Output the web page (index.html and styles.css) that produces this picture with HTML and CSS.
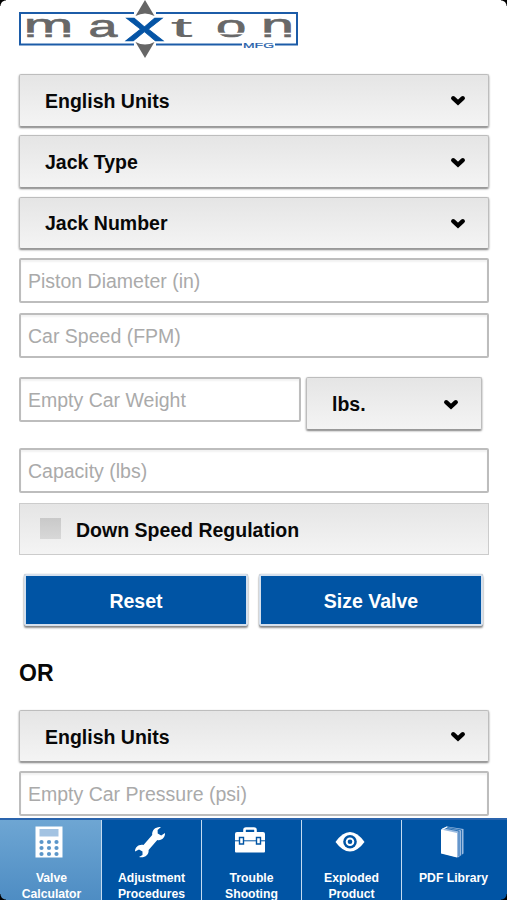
FILE: index.html
```
<!DOCTYPE html>
<html lang="en">
<head>
<meta charset="utf-8">
<meta name="viewport" content="width=device-width">
<title>Maxton Valve Calculator</title>
<link rel="stylesheet" href="styles.css">
</head>
<body>
<svg width="0" height="0" class="defs"><defs>
  <symbol id="chev" viewBox="0 0 16 12"><path d="M3.200 3.200 8 7.600 12.800 3.200" fill="none" stroke="#000" stroke-width="4.300" stroke-linecap="round"/></symbol>
</defs></svg>
<main class="screen">
  <header class="brand">
    <svg width="300" height="62" viewBox="0 0 300 62" role="img" aria-label="maxton MFG">
      <rect x="20" y="13" width="277" height="31.5" fill="#fff" stroke="#1c5ca8" stroke-width="2"/>
      <path d="M134 10h22v8h-22zM134 39h22v8h-22zM242 41h33v7h-33z" fill="#fff"/>
      <path d="M145 0 154.500 16 Q145 11 135.500 16ZM145 58 154.500 42 Q145 47 135.500 42Z" fill="#666"/>
      <g class="letters">
        <text transform="translate(23.8 37.3) scale(1.8 1)" font-size="33">m</text>
        <text transform="translate(88.500 37) scale(1.62 1)" font-size="32">a</text>
        <text transform="translate(170.500 37) scale(2.850 1)" font-size="28" class="t" textLength="9">t</text>
        <text transform="translate(216 37) scale(1.7 1)" font-size="32">o</text>
        <text transform="translate(261 37.3) scale(1.8 1)" font-size="33">n</text>
      </g>
      <path d="M26 33.500h47M215 33.500h33M263 33.500h31" stroke="#fff" stroke-width="1.400"/>
      <text class="x" transform="translate(124.800 41) scale(1.840 1)" font-size="43">x</text>
      <text class="mfg" x="243" y="47.500" font-size="8" textLength="31" lengthAdjust="spacingAndGlyphs">MFG</text>
    </svg>
  </header>
  <form class="form">
    <button type="button" class="select"><span>English Units</span><svg class="chev"><use href="#chev"/></svg></button>
    <button type="button" class="select"><span>Jack Type</span><svg class="chev"><use href="#chev"/></svg></button>
    <button type="button" class="select"><span>Jack Number</span><svg class="chev"><use href="#chev"/></svg></button>
    <input class="field" placeholder="Piston Diameter (in)">
    <input class="field" placeholder="Car Speed (FPM)">
    <div class="weight">
      <input class="field" placeholder="Empty Car Weight">
      <button type="button" class="select"><span>lbs.</span><svg class="chev"><use href="#chev"/></svg></button>
    </div>
    <input class="field" placeholder="Capacity (lbs)">
    <div class="check"><i class="box"></i><span>Down Speed Regulation</span></div>
    <div class="actions"><button type="button">Reset</button><button type="button">Size Valve</button></div>
    <h2>OR</h2>
    <button type="button" class="select"><span>English Units</span><svg class="chev"><use href="#chev"/></svg></button>
    <input class="field" placeholder="Empty Car Pressure (psi)">
  </form>
  <nav class="tabs">
    <a class="tab active">
      <svg viewBox="0 0 36 36"><path fill="#fff" d="M4.500 2.500h27v31h-27z"/><path fill="#a3c3e2" d="M8.500 5h19v7.500h-19z"/><g fill="#5b96c9"><circle cx="10.500" cy="18" r="2.100"/><circle cx="18" cy="18" r="2.100"/><circle cx="25.500" cy="18" r="2.100"/><circle cx="10.500" cy="24" r="2.100"/><circle cx="18" cy="24" r="2.100"/><circle cx="25.500" cy="24" r="2.100"/><circle cx="10.500" cy="30" r="2.100"/><circle cx="18" cy="30" r="2.100"/><circle cx="25.500" cy="30" r="2.100"/></g></svg>
      <span>Valve<br>Calculator</span>
    </a>
    <a class="tab">
      <svg viewBox="0 0 36 36"><path fill="#fff" d="M29 3C24 2.200 19.500 6 20.200 11L11.500 21C7 20 3 23 3 27.500L7 25.600 10.500 27.500 10.500 31 7 33C12 34.500 17.200 31 16.600 26L25.300 16C29.500 17 33.300 13.500 33 9L29.200 11.500 25.700 9.500 25.600 6Z"/></svg>
      <span>Adjustment<br>Procedures</span>
    </a>
    <a class="tab">
      <svg viewBox="0 0 36 36"><path fill="none" stroke="#fff" stroke-width="2.600" d="M12.500 9V6q0-1.500 1.500-1.500h8q1.500 0 1.500 1.500v3"/><path fill="#fff" d="M5 8h26q2 0 2 2v17.500q0 1-1 1H4q-1 0-1-1V10q0-2 2-2z"/><path stroke="#0054a4" stroke-width="1" d="M2 16.800h6M12 16.800h12M28 16.800h6"/><path fill="#fff" stroke="#0054a4" stroke-width="1.400" d="M7.500 13.500h4v6.500h-4zM24.500 13.500h4v6.500h-4z"/></svg>
      <span>Trouble<br>Shooting</span>
    </a>
    <a class="tab">
      <svg viewBox="0 0 36 36"><path fill="#fff" d="M3.500 18Q10.500 8 18 8t14.500 10Q25.500 27.500 18 27.500T3.500 18Z"/><circle cx="18" cy="17.800" r="6.800" fill="#0054a4"/><circle cx="18" cy="17.800" r="4.300" fill="#fff"/><circle cx="18" cy="17.800" r="2.300" fill="#0054a4"/></svg>
      <span>Exploded<br>Product</span>
    </a>
    <a class="tab library">
      <svg viewBox="0 0 36 36"><path fill="#9bbbe0" d="M8 4.500 13 2.500 29.500 5v24.500L24 33.500 7 29z"/><path d="M10 4 25 7v25M12.500 3.300 27.500 6v25" stroke="#0054a4" stroke-width=".7" fill="none"/><path fill="#fff" d="M7 5.500 23 9v24.500L7 29.500zM7 5.500 12.500 2.500 14 3 9.500 5.500Z"/></svg>
      <span>PDF Library</span>
    </a>
  </nav>
  <i class="corner tl"></i><i class="corner tr"></i><i class="corner bl"></i><i class="corner br"></i>
</main>
</body>
</html>
```
FILE: styles.css
```
* { box-sizing: border-box; }
body { margin: 0; background: #fff; font-family: "Liberation Sans", Arial, sans-serif; color: #080808; }
.defs { position: absolute; }
.screen { position: relative; height: 900px; overflow: hidden; display: flex; flex-direction: column; }
.brand { height: 74px; flex: none; }
.brand svg { display: block; }
.letters text { font-family: "Liberation Sans", sans-serif; fill: #686868; stroke: #686868; stroke-width: .7px; }
.letters .t { stroke: none; }
.x { font-family: "Liberation Sans", sans-serif; fill: #0554a5; stroke: #0554a5; stroke-width: .6px; }
.mfg { font-family: "Liberation Sans", sans-serif; fill: #1c5ca8; stroke: #1c5ca8; stroke-width: .2px; }
.form { flex: none; height: 744px; padding: 0 18px 0 19px; display: flex; flex-direction: column; }
button, input { font-family: inherit; margin: 0; border-radius: 0; }
.select {
  flex: none; width: 100%; height: 52.5px; margin-bottom: 8.8px; padding: 2px 22px 0 25px;
  display: flex; align-items: center; justify-content: space-between;
  font-size: 19.500px; font-weight: bold; color: #080808;
  background: linear-gradient(#e5e5e5, #f4f4f4); border: 1px solid #bdbdbd; border-bottom-color: #999;
  border-radius: 2px; box-shadow: 0 1px 2px rgba(0, 0, 0, .5);
}
.chev { width: 16px; height: 12px; }
.field {
  flex: none; width: 100%; height: 45px; margin-bottom: 9.700px; padding: 2px 7px 0;
  font-size: 19.500px; border: 2px solid #bdbdbd; border-radius: 2px; background: #fff;
  box-shadow: inset 0 2px 2px #f2f2f2; outline: 0;
}
.field::placeholder { color: #aaa; opacity: 1; }
.weight { display: flex; align-items: flex-start; gap: 5px; margin: 10px 7px 18.500px 0; }
.weight .field { width: 282px; margin: 0; }
.weight .select { width: auto; flex: 1; margin: 0; }
.check {
  flex: none; height: 52px; padding-left: 20px; display: flex; align-items: center; gap: 15px;
  font-size: 19.500px; font-weight: bold; background: linear-gradient(#e5e5e5, #f4f4f4); border: 1px solid #ccc;
}
.check span { padding-top: 3px; }
.box { width: 21px; height: 21px; background: linear-gradient(#c9c9c9, #d8d8d8); }
.actions { display: flex; gap: 11px; margin: 19.500px 6px 0 5px; }
.actions button {
  flex: 1; height: 52px; padding: 3px 0 0; font-size: 19.500px; font-weight: bold; color: #fff; background: #0054a4;
  border: 2px solid #d5e0ed; border-radius: 2px; box-shadow: 0 2px 2px rgba(0, 0, 0, .45), 0 0 1px #888;
}
h2 { margin: 33px 0 22.300px; font-size: 23px; line-height: 28px; }
.tabs { height: 82px; flex: none; display: grid; grid-template-columns: 102px 100px 100px 100px 1fr; background: #0054a4; border-top: 2px solid #2a64ad; }
.tab { display: flex; flex-direction: column; align-items: center; padding-top: 4px; border-right: 1.500px solid #c5dbf0; color: #fff; font-size: 12.200px; line-height: 16px; font-weight: bold; text-align: center; }
.tab:last-child { border: 0; }
.tab svg { width: 36px; height: 36px; flex: none; margin: 0 3px 10px 0; }
.active { background: linear-gradient(#6ea6d3, #4d8cc3); padding-left: 2px; }
.active svg { margin-right: 6px; }
.tab.library { padding-right: 2px; }
.corner { position: absolute; width: 6px; height: 6px; }
.tl { top: 0; left: 0; background: radial-gradient(circle at 100% 100%, transparent 5px, #000 6px); }
.tr { top: 0; right: 0; background: radial-gradient(circle at 0 100%, transparent 5px, #000 6px); }
.bl { bottom: 0; left: 0; background: radial-gradient(circle at 100% 0, transparent 5px, #000 6px); }
.br { bottom: 0; right: 0; background: radial-gradient(circle at 0 0, transparent 5px, #000 6px); }
```
